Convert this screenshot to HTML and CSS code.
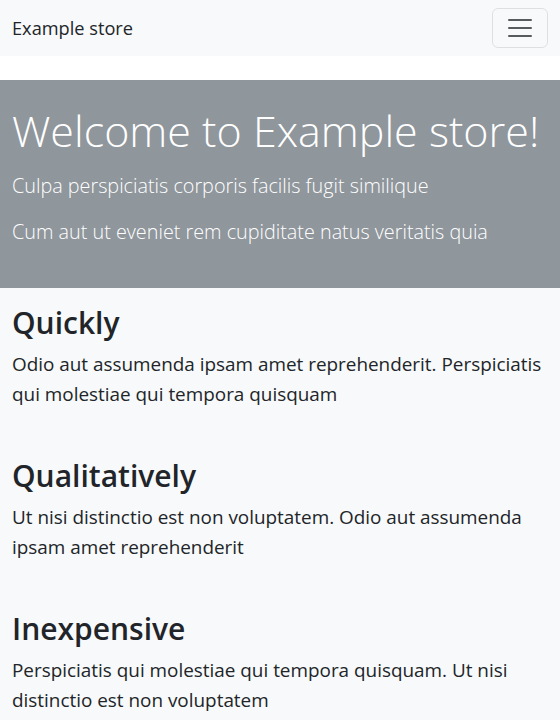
FILE: index.html
```html
<!DOCTYPE html>
<html lang="en">
<head>
<meta charset="utf-8">
<title>Example store</title>
<link rel="stylesheet" href="styles.css">
</head>
<body>
<header class="navbar">
  <a class="brand" href="#">Example store</a>
  <button class="toggler" type="button" aria-label="Toggle navigation">
    <svg width="30" height="30" viewBox="0 0 30 30" aria-hidden="true"><path d="M4 7h22M4 15h22M4 23h22" stroke="rgba(33,37,41,0.75)" stroke-width="2" stroke-linecap="round"/></svg>
  </button>
</header>
<main>
  <section class="hero">
    <h1 class="hero-title">Welcome to Example store!</h1>
    <p class="lead">Culpa perspiciatis corporis facilis fugit similique</p>
    <p class="lead">Cum aut ut eveniet rem cupiditate natus veritatis quia</p>
  </section>
  <section class="features">
    <div class="feature">
      <h2>Quickly</h2>
      <p>Odio aut assumenda ipsam amet reprehenderit. Perspiciatis qui molestiae qui tempora quisquam</p>
    </div>
    <div class="feature">
      <h2>Qualitatively</h2>
      <p>Ut nisi distinctio est non voluptatem. Odio aut assumenda ipsam amet reprehenderit</p>
    </div>
    <div class="feature">
      <h2>Inexpensive</h2>
      <p>Perspiciatis qui molestiae qui tempora quisquam. Ut nisi distinctio est non voluptatem</p>
    </div>
  </section>
</main>
</body>
</html>
```

FILE: styles.css
```css
* { box-sizing: border-box; }
html, body { margin: 0; padding: 0; }
body {
  font-family: "Open Sans", "Noto Sans", sans-serif;
  color: #212529;
  background: #fff;
}
.navbar {
  height: 56px;
  background: #f8f9fa;
  display: flex;
  align-items: center;
  justify-content: space-between;
  padding: 0 12px;
}
.brand {
  font-size: 18.2px;
  color: #212529;
  text-decoration: none;
  line-height: 30px;
}
.toggler {
  width: 56px;
  height: 40px;
  padding: 0;
  display: flex;
  align-items: center;
  justify-content: center;
  background: transparent;
  border: 1px solid rgba(0,0,0,0.1);
  border-radius: 6px;
}
.toggler svg { display: block; }
.hero {
  margin-top: 24px;
  background: #8f969c;
  color: #fff;
  padding: 24px 12px 25px;
}
.hero-title {
  margin: 0 0 14px;
  font-size: 43px;
  font-weight: 300;
  line-height: 53px;
  white-space: nowrap;
}
.lead {
  margin: 0 0 16px;
  font-size: 19.8px;
  font-weight: 300;
  line-height: 30px;
}
.features {
  background: #f8f9fa;
  padding: 0 12px;
  height: 432px;
  overflow: hidden;
}
.feature { padding: 16px 0; }
.feature h2 {
  margin: 0 0 8px;
  font-size: 30px;
  font-weight: 600;
  line-height: 37px;
}
.feature p {
  margin: 0 0 16px;
  font-size: 18.9px;
  line-height: 30px;
}
```
